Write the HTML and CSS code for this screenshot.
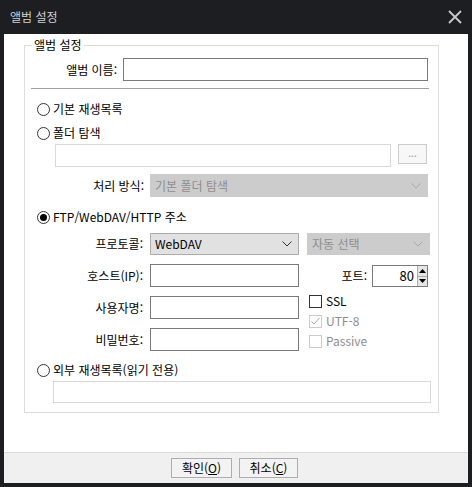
FILE: index.html
```html
<!DOCTYPE html>
<html lang="ko">
<head>
<meta charset="utf-8">
<title>앨범 설정</title>
<link rel="stylesheet" href="styles.css">
</head>
<body>
<div class="window">
  <div class="titlebar">
    <span class="title">앨범 설정</span>
    <svg class="close" width="14" height="14" viewBox="0 0 14 14"><path d="M1 1L13 13M13 1L1 13" stroke="#c9c9c9" stroke-width="1.8" fill="none"/></svg>
  </div>
  <div class="content">
    <div class="group">
      <span class="legend">앨범 설정</span>
      <div class="row album-row">
        <span class="label w-album">앨범 이름:</span>
        <div class="input album-input"></div>
      </div>
      <div class="sep"></div>
      <div class="radio-row first">
        <span class="radio"></span><span>기본 재생목록</span>
      </div>
      <div class="radio-row second">
        <span class="radio"></span><span>폴더 탐색</span>
      </div>
      <div class="row folder-row">
        <div class="input disabled folder-input"></div>
        <div class="btn-dots">...</div>
      </div>
      <div class="row process-row">
        <span class="label w-process">처리 방식:</span>
        <div class="select disabled process-select"><span>기본 폴더 탐색</span><svg width="10" height="6" viewBox="0 0 10 6"><path d="M0.5 0.5L5 5L9.5 0.5" stroke="#a9a9a9" fill="none"/></svg></div>
      </div>
      <div class="radio-row ftp">
        <span class="radio checked"></span><span>FTP/WebDAV/HTTP 주소</span>
      </div>
      <div class="ftp-section">
        <div class="ftp-left">
          <div class="row">
            <span class="label w-ftp">프로토콜:</span>
            <div class="select proto-select"><span>WebDAV</span><svg width="10" height="6" viewBox="0 0 10 6"><path d="M0.5 0.5L5 5L9.5 0.5" stroke="#333" fill="none"/></svg></div>
          </div>
          <div class="row gap-row">
            <span class="label w-ftp">호스트(IP):</span>
            <div class="input ftp-input"></div>
          </div>
          <div class="row gap-row">
            <span class="label w-ftp">사용자명:</span>
            <div class="input ftp-input"></div>
          </div>
          <div class="row gap-row">
            <span class="label w-ftp">비밀번호:</span>
            <div class="input ftp-input"></div>
          </div>
        </div>
        <div class="ftp-right">
          <div class="select disabled auto-select"><span>자동 선택</span><svg width="10" height="6" viewBox="0 0 10 6"><path d="M0.5 0.5L5 5L9.5 0.5" stroke="#a9a9a9" fill="none"/></svg></div>
          <div class="row port-row">
            <span class="label w-port">포트:</span>
            <div class="port">
              <div class="port-field">80</div>
              <div class="spin">
                <div class="spin-btn"><svg width="7" height="4" viewBox="0 0 7 4"><path d="M0 4L3.5 0L7 4Z" fill="#000"/></svg></div>
                <div class="spin-btn"><svg width="7" height="4" viewBox="0 0 7 4"><path d="M0 0L3.5 4L7 0Z" fill="#000"/></svg></div>
              </div>
            </div>
          </div>
          <div class="check-row first-check">
            <span class="check"></span><span>SSL</span>
          </div>
          <div class="check-row dim">
            <span class="check disabled"><svg width="11" height="11" viewBox="0 0 11 11"><path d="M1.5 5.5L4 8L9.5 2" stroke="#a6a6a6" stroke-width="1" fill="none"/></svg></span><span>UTF-8</span>
          </div>
          <div class="check-row dim">
            <span class="check disabled"></span><span>Passive</span>
          </div>
        </div>
      </div>
      <div class="radio-row ext">
        <span class="radio"></span><span>외부 재생목록(읽기 전용)</span>
      </div>
      <div class="input disabled ext-input"></div>
    </div>
  </div>
  <div class="footer">
    <div class="button">확인(<u>O</u>)</div>
    <div class="button">취소(<u>C</u>)</div>
  </div>
</div>
</body>
</html>
```
FILE: styles.css
```css
* { box-sizing: border-box; }
html, body { margin: 0; padding: 0; }
body {
  font-family: "Noto Sans CJK KR", "Noto Sans", sans-serif;
  font-size: 12px;
  line-height: 16px;
  color: #000;
  background: #1d1e22;
}
.window {
  width: 472px;
  height: 487px;
  background: #1d1e22;
  display: flex;
  flex-direction: column;
  padding: 0 4px 4px 4px;
}
.titlebar {
  height: 34px;
  flex: none;
  display: flex;
  align-items: center;
  justify-content: space-between;
  padding: 0 6px 0 6px;
}
.title { color: #cfcfcf; font-size: 12px; }
.close { margin-top: 0; }
.content {
  flex: 1;
  background: #fff;
  padding: 11px 0 0 20px;
}
.group {
  position: relative;
  width: 415px;
  border: 1px solid #dcdcdc;
  padding: 12px 0 9px 0;
}
.legend {
  position: absolute;
  top: -9px;
  left: 7px;
  background: #fff;
  padding: 0 2px;
}
.row { display: flex; align-items: center; }
.label { text-align: right; flex: none; white-space: nowrap; }
.w-album { width: 92px; margin-right: 6px; }
.w-process { width: 119px; margin-right: 6px; }
.w-ftp { width: 118px; margin-right: 7px; }
.w-port { width: 60px; margin-right: 5px; }
.input {
  height: 23px;
  border: 1px solid #7a7a7a;
  background: #fff;
}
.input.disabled { border-color: #d9d9d9; }
.album-input { width: 305px; }
.sep {
  margin: 7px 0 0 6px;
  width: 398px;
  height: 1px;
  background: #a0a0a0;
}
.radio-row {
  display: flex;
  align-items: center;
  height: 20px;
  padding-left: 12px;
}
.radio-row.first { margin-top: 10px; }
.radio-row.second { margin-top: 4px; }
.radio-row.ftp { margin-top: 10px; }
.radio-row.ext { margin-top: 9px; }
.radio {
  width: 13px;
  height: 13px;
  border: 1px solid #333;
  border-radius: 50%;
  margin-right: 3px;
  position: relative;
  flex: none;
}
.radio.checked::after {
  content: "";
  position: absolute;
  left: 2px;
  top: 2px;
  width: 7px;
  height: 7px;
  border-radius: 50%;
  background: #000;
}
.folder-row {
  margin: 1px 0 0 30px;
  align-items: flex-start;
}
.folder-input { width: 336px; }
.btn-dots {
  width: 29px;
  height: 20px;
  margin-left: 7px;
  border: 1px solid #cccccc;
  background: #f7f7f7;
  color: #9a9a9a;
  font-size: 10px;
  line-height: 16px;
  text-align: center;
}
.process-row { margin-top: 7px; }
.select {
  height: 22px;
  display: flex;
  align-items: center;
  justify-content: space-between;
  padding: 0 6px 0 4px;
  border: 1px solid #adadad;
  background: #e1e1e1;
}
.select.disabled {
  background: #cccccc;
  border-color: #cccccc;
  color: #8e8e8e;
}
.process-select { width: 278px; height: 23px; }
.ftp-section {
  display: flex;
  margin-top: 6px;
}
.ftp-left { width: 274px; }
.gap-row { margin-top: 9px; }
.proto-select { width: 149px; }
.ftp-input { width: 149px; }
.ftp-right {
  margin-left: 8px;
  display: flex;
  flex-direction: column;
}
.auto-select { width: 123px; }
.port-row { margin-top: 10px; }
.port {
  display: flex;
  width: 56px;
  height: 22px;
  border: 1px solid #7a7a7a;
}
.port-field {
  flex: 1;
  text-align: right;
  padding-right: 3px;
  line-height: 20px;
  font-size: 13px;
}
.spin {
  width: 10px;
  display: flex;
  flex-direction: column;
  border-left: 1px solid #adadad;
}
.spin-btn {
  flex: 1;
  display: flex;
  align-items: center;
  justify-content: center;
  background: #e5e5e5;
}
.spin-btn + .spin-btn { border-top: 1px solid #adadad; }
.check-row {
  display: flex;
  align-items: center;
  height: 20px;
  padding-left: 2px;
}
.check-row.first-check { margin-top: 4px; }
.check-row.dim { color: #8e8e8e; }
.check {
  width: 13px;
  height: 13px;
  border: 1px solid #333;
  margin-right: 4px;
  flex: none;
  display: flex;
  align-items: center;
  justify-content: center;
}
.check.disabled { border-color: #cccccc; }
.ext-input {
  margin: 1px 0 0 28px;
  width: 378px;
  height: 22px;
}
.footer {
  height: 31px;
  flex: none;
  background: #f0f0f0;
  border-top: 1px solid #dadada;
  display: flex;
  justify-content: center;
  align-items: flex-start;
  gap: 7px;
  padding-top: 5px;
  padding-right: 3px;
}
.button {
  height: 20px;
  border: 1px solid #adadad;
  background: #f3f3f3;
  line-height: 18px;
  text-align: center;
}
.button:first-child { width: 61px; }
.button:last-child { width: 59px; }
.button u { text-underline-offset: 1px; }
```
